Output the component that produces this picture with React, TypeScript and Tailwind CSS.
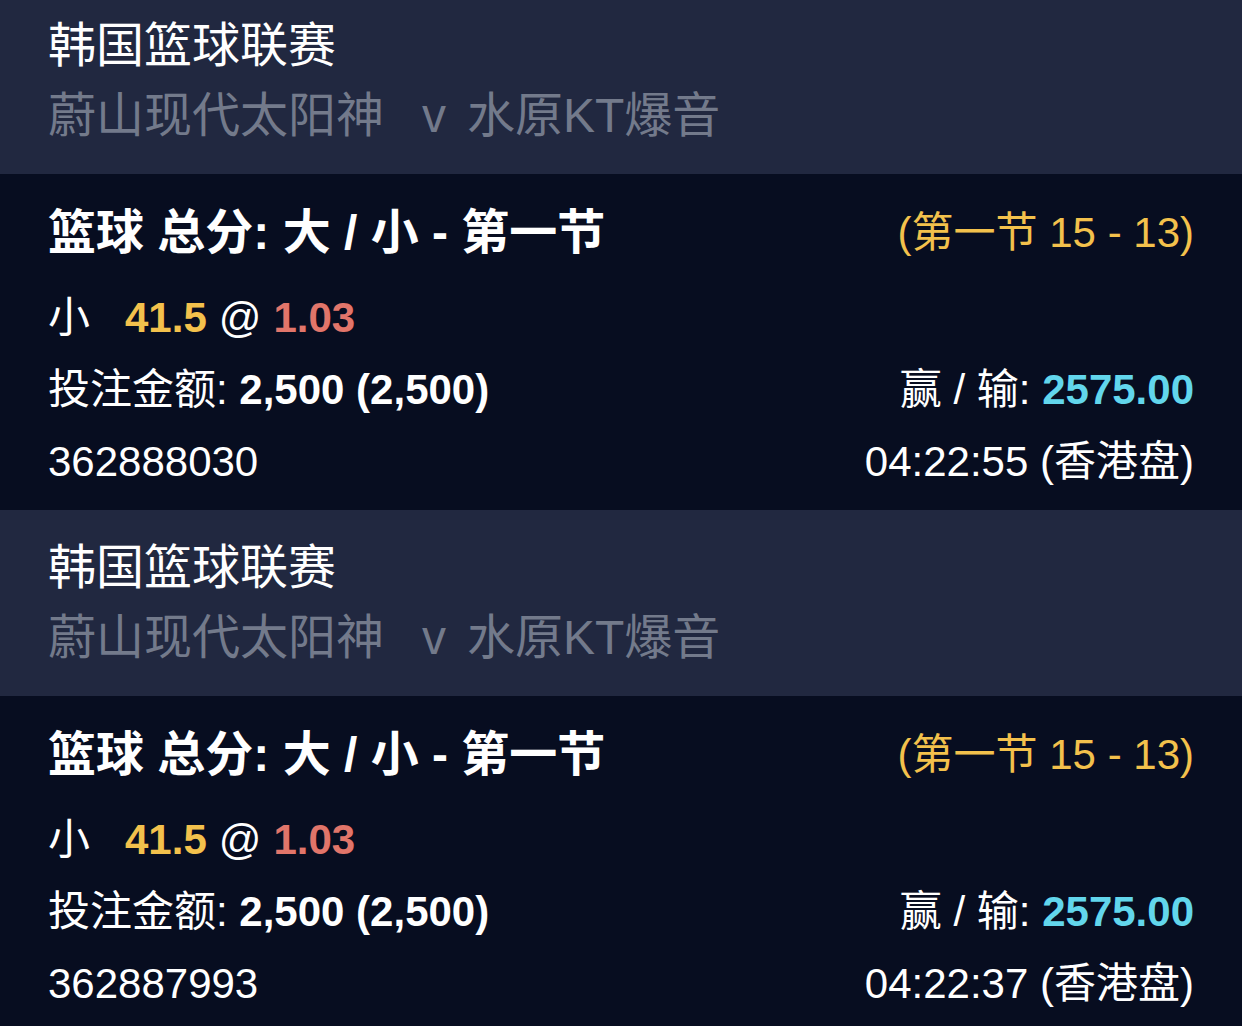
const bets = [
  { id: "362888030", time: "04:22:55" },
  { id: "362887993", time: "04:22:37" },
];

function BetCard({ id, time }: { id: string; time: string }) {
  return (
    <div>
      {/* League / match header */}
      <div className="bg-[#212840] py-[23px] pl-[48px] pr-[48px]">
        <div className="text-[48px] leading-[70px] text-white">韩国篮球联赛</div>
        <div className="flex text-[48px] leading-[70px] text-[#737a8b]">
          <span>蔚山现代太阳神</span>
          <span className="ml-[38px] mr-[21px]">v</span>
          <span>水原KT爆音</span>
        </div>
      </div>

      {/* Bet details */}
      <div className="bg-[#070d20] pb-[12px] pl-[48px] pr-[48px] pt-[24px] text-white">
        <div className="flex items-center justify-between leading-[70px]">
          <span className="text-[48px] font-bold">篮球 总分: 大 / 小 - 第一节</span>
          <span className="text-[42px] text-[#f3c14c]">(第一节 15 - 13)</span>
        </div>
        <div className="mt-[14px] flex items-center text-[42px] leading-[72px]">
          <span>小</span>
          <span className="ml-[35px] font-bold text-[#f3c14c]">41.5</span>
          <span className="mx-[12px]">@</span>
          <span className="font-bold text-[#e1756a]">1.03</span>
        </div>
        <div className="flex items-center justify-between text-[42px] leading-[72px]">
          <span>
            投注金额: <span className="font-bold">2,500 (2,500)</span>
          </span>
          <span>
            赢 / 输: <span className="font-bold text-[#62d6ec]">2575.00</span>
          </span>
        </div>
        <div className="flex items-center justify-between text-[42px] leading-[72px]">
          <span>{id}</span>
          <span>{time} (香港盘)</span>
        </div>
      </div>
    </div>
  );
}

export default function App() {
  return (
    <div
      className="h-[1026px] w-[1242px] overflow-hidden bg-[#070d20]"
      style={{ fontFamily: '"Liberation Sans", "Noto Sans CJK SC", sans-serif' }}
    >
      <div className="-mt-[12px]">
        {bets.map((b) => (
          <BetCard key={b.id} id={b.id} time={b.time} />
        ))}
      </div>
    </div>
  );
}
